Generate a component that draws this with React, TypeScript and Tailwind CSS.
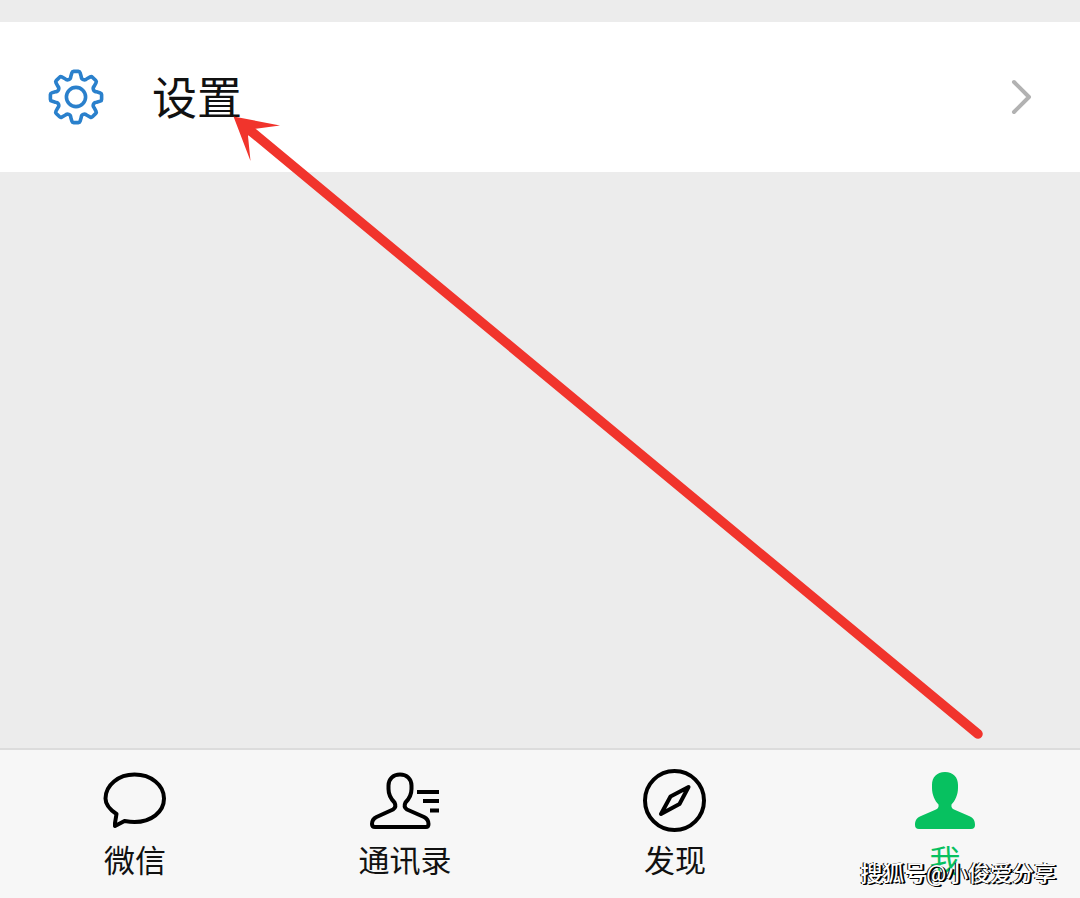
import type { ReactNode } from "react";

const cjk = "font-['Roboto','Noto_Sans_CJK_SC',sans-serif]";

function gearPath(): string {
  const at = (x: number, y: number, a: number) =>
    `${(x * Math.cos(a) - y * Math.sin(a)).toFixed(2)} ${(x * Math.sin(a) + y * Math.cos(a)).toFixed(2)}`;
  const parts: string[] = [];
  for (let i = 0; i < 8; i++) {
    const a = (i * Math.PI) / 4;
    parts.push(`${i === 0 ? "M" : "L"}${at(-5.2, -20.6, a)}`);
    parts.push(`L${at(-4.1, -24.3, a)}`);
    parts.push(`Q${at(-3.7, -25.6, a)} ${at(-2.4, -25.6, a)}`);
    parts.push(`L${at(2.4, -25.6, a)}`);
    parts.push(`Q${at(3.7, -25.6, a)} ${at(4.1, -24.3, a)}`);
    parts.push(`L${at(5.2, -20.6, a)}`);
    const m = a + Math.PI / 8;
    parts.push(`Q${at(-2.2, -18.9, m)} ${at(0, -18.9, m)}`);
    parts.push(`Q${at(2.2, -18.9, m)} ${at(-5.2, -20.6, a + Math.PI / 4)}`);
  }
  return parts.join("") + "Z";
}

function Tab({ label, active, children }: { label: string; active?: boolean; children: ReactNode }) {
  return (
    <a
      href="#"
      aria-current={active ? "page" : undefined}
      className={`flex flex-1 flex-col items-center pt-4 pb-3 ${active ? "text-[#07c160]" : "text-[#111111]"}`}
    >
      <svg viewBox="0 0 80 72" className="h-18 w-20" fill="none" aria-hidden="true">
        {children}
      </svg>
      <span className="text-[31px] leading-12">{label}</span>
    </a>
  );
}

export default function App() {
  return (
    <div className={`relative flex min-h-screen flex-col bg-[#ececec] pt-[22px] ${cjk}`}>
      <a href="#" className="flex items-center bg-white px-12 py-10 text-[#111111]">
        <svg viewBox="-28 -28 56 56" className="h-14 w-14" fill="none" stroke="#2a80cc" strokeWidth="3.6" strokeLinejoin="round" aria-hidden="true">
          <path d={gearPath()} />
          <circle r="9.6" />
        </svg>
        <span className="ml-12 flex-1 pt-1.5 text-[45px] leading-16">设置</span>
        <svg viewBox="0 0 24 40" className="h-10 w-6" fill="none" stroke="#b2b2b2" strokeWidth="4" strokeLinecap="round" strokeLinejoin="round" aria-hidden="true">
          <path d="M6 5L21 20L6 35" />
        </svg>
      </a>

      <main className="flex-1" />

      <nav className="flex border-t-2 border-[#dcdcdc] bg-[#f7f7f7]">
        <Tab label="微信">
          <path d="M20 57L21.5 48C14 43 10.5 38 10.5 32.5C10.5 19 23.5 8.500 39.500 8.500C56 8.500 69 19 69 32.500C69 46 56 56 39.500 56C36 56 32.500 55.500 29.500 55L20 60Z" stroke="#000" strokeWidth="4" strokeLinejoin="round" />
        </Tab>
        <Tab label="通讯录">
          <path d="M35 8.500C42 8.500 46.500 13 46.500 19.500V23C46.500 29 43.500 33.500 40.500 36.500C39 39.500 39.500 42 42 43.500L59 51C62 52.500 63.500 54.500 63.500 58Q63.500 61 61 61H10Q7 61 7 58C7 54.500 8.500 52.500 11.500 51L28 43.500C30.500 42 31 39.500 29.500 36.500C26.500 33.500 23.500 29 23.500 23V19.500C23.500 13 28 8.500 35 8.500Z" stroke="#000" strokeWidth="4" strokeLinejoin="round" />
          <path d="M52 26H74M58 35H74M65 44.500H74" stroke="#000" strokeWidth="4" />
        </Tab>
        <Tab label="发现">
          <circle cx="39.5" cy="34.5" r="29.5" stroke="#000" strokeWidth="4" />
          <path d="M53.500 21L44.500 38L26 48L35.500 30.500Z" stroke="#000" strokeWidth="4" strokeLinejoin="round" />
        </Tab>
        <Tab label="我" active>
          <path d="M40 6C48.500 6 53 11.500 53 19V22C53 29 50 35 46.500 38.500C46 41 47 42.500 49 43.500L64 50C68.500 52 70 54.500 70 59Q70 63 66 63H14Q10 63 10 59C10 54.500 11.500 52 16 50L31 43.500C33 42.500 34 41 33.500 38.500C30 35 27 29 27 22V19C27 11.500 31.500 6 40 6Z" fill="#07c160" />
        </Tab>
      </nav>

      <svg viewBox="0 0 1080 898" className="pointer-events-none absolute top-0 left-0 w-full" aria-hidden="true">
        <path d="M252 132L978 734" stroke="#f1342c" strokeWidth="9.5" strokeLinecap="round" />
        <path d="M233.500 116.500L280 125.500L254 129L248 136L250.500 161Z" fill="#f1342c" />
      </svg>
      <p className="absolute right-6 bottom-2 text-[22px] leading-8 font-medium text-white [text-shadow:-1px_0_0_#000,1px_1px_0_#000,2px_1px_0_#000]">搜狐号@小俊爱分享</p>
    </div>
  );
}
